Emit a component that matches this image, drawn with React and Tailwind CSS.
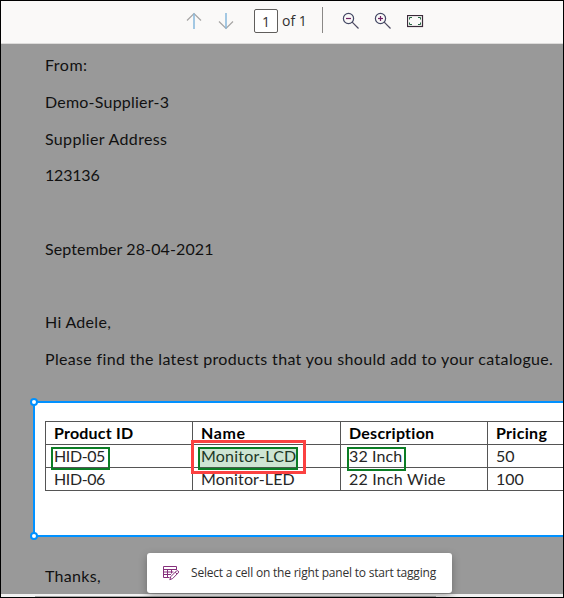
import React from "react";

const letterLines = [
  { text: "From:", spacing: "tracking-[0.5px]" },
  { text: "Demo-Supplier-3", spacing: "tracking-[0.22px]" },
  { text: "Supplier Address", spacing: "tracking-[0.34px]" },
  { text: "123136", spacing: "tracking-[-0.2px]" },
  { text: "", spacing: "" },
  { text: "September 28-04-2021", spacing: "tracking-[0.11px]" },
  { text: "", spacing: "" },
  { text: "Hi Adele,", spacing: "tracking-[0.3px]" },
  { text: "Please find the latest products that you should add to your catalogue.", spacing: "tracking-[0.34px]" },
];

function Arrow({ down }) {
  return (
    <svg width="16" height="18" viewBox="0 0 16 18" fill="none" className={down ? "rotate-180" : ""}>
      <path d="M1 8.5 L8 1.5 L15 8.5" stroke="#a6a5a4" strokeWidth="1.2" />
      <path d="M8 1.5 V17" stroke="#86b7dc" strokeWidth="1.5" />
    </svg>
  );
}

function Magnifier({ plus }) {
  return (
    <svg width="18" height="18" viewBox="0 0 18 18" fill="none" strokeWidth="1.2">
      <circle cx="6.5" cy="6.5" r="5.1" stroke="#454a66" />
      <path d="M10.2 10.2 L16.5 16.5" stroke="#4d4961" />
      <path d="M4 6.5 H9" stroke="#712164" />
      {plus && <path d="M6.5 4 V9" stroke="#712164" />}
    </svg>
  );
}

function FitPage() {
  return (
    <svg width="17" height="13" viewBox="0 0 17 13" fill="none">
      <rect x="0.5" y="0.5" width="15" height="11" stroke="#3b2a3a" strokeWidth="1.2" />
      <path d="M2.5 4.5 V2.5 H5 M11 2.5 H13.5 V4.5 M13.5 7.5 V9.5 H11 M5 9.5 H2.5 V7.5" stroke="#276b45" />
    </svg>
  );
}

function TableEdit() {
  return (
    <svg width="17" height="15" viewBox="0 0 17 15" fill="none" stroke="#86307c">
      <path d="M6.5 11.5 H0.5 V0.5 H13.5 V4 M0.5 3.5 H13.5 M0.5 6 H10.5 M0.5 8.5 H8 M4.5 3.5 V11.5 M8.5 3.5 V7.5" strokeWidth="1" />
      <path d="M6.8 13.7 L7.8 10.6 L13.4 5 Q14.5 4.2 15.3 5.1 Q16.1 6 15.2 6.9 L9.7 12.5 Z M12.2 6.2 L14 8" fill="#fff" strokeWidth="1" />
    </svg>
  );
}

function Handle({ place }) {
  return <span className={`absolute ${place} size-2 rounded-full border-2 border-[#0091ff] bg-white`} />;
}

function Cell({ children, bold, mark, spacing = "" }) {
  return (
    <div className={`relative flex items-center border-r border-b border-[#555] pl-2 whitespace-nowrap ${bold ? "font-bold text-black" : "text-[#262626]"}`}>
      <span className={spacing}>{children}</span>
      {mark}
    </div>
  );
}

export default function App() {
  return (
    <div className="relative flex h-[598px] w-[564px] flex-col overflow-hidden border border-black bg-[#999] font-['Lato',sans-serif] text-[16px] text-[#111]">
      <header className="flex h-[43px] shrink-0 items-start border-b border-[#dddcdb] bg-[#faf9f8] font-['Open_Sans',sans-serif]">
        <div className="mt-[11px] ml-[185px] flex gap-4">
          <Arrow />
          <Arrow down />
        </div>
        <div className="mt-2 ml-5 flex h-6 w-6 items-center justify-center rounded-[2px] border border-[#605e5c] bg-white text-[14px] text-[#323130]">1</div>
        <span className="mt-2 ml-1 w-[25px] text-[14px] leading-6 whitespace-nowrap text-[#323130]">of 1</span>
        <div className="mt-1.5 ml-[15px] h-[26px] w-px bg-[#8a8886]" />
        <div className="mt-[11px] ml-[19px] flex gap-[14px]">
          <Magnifier />
          <Magnifier plus />
        </div>
        <div className="mt-[14px] ml-[15px]">
          <FitPage />
        </div>
      </header>

      <main className="flex min-h-0 flex-1 flex-col pt-[3px]">
        <div className="shrink-0 pl-[44px]">
          {letterLines.map((line, i) => (
            <p key={i} className={`h-[36.75px] leading-[36.75px] whitespace-nowrap ${line.spacing}`}>{line.text}</p>
          ))}
        </div>

        <section className="relative mt-[23px] ml-8 h-[136px] shrink-0 border-y-2 border-l-2 border-[#0091ff] bg-white pt-[18px] pl-[10px]">
          <Handle place="-top-[5px] -left-[5px]" />
          <Handle place="-bottom-[5px] -left-[5px]" />
          <div className="grid w-[590px] grid-cols-[147px_148px_147px_147px] grid-rows-[23px_23px_23px] border-t border-l border-[#555]">
            <Cell bold spacing="tracking-[0.2px]">Product ID</Cell>
            <Cell bold spacing="tracking-[0.6px]">Name</Cell>
            <Cell bold spacing="tracking-[0.25px]">Description</Cell>
            <Cell bold spacing="tracking-[0.3px]">Pricing</Cell>
            <Cell spacing="tracking-[-0.4px]" mark={<span className="absolute top-[2px] left-[5px] h-[23px] w-[59px] border-2 border-[#0b7d25]" />}>HID-05</Cell>
            <Cell
              spacing="tracking-[0.2px]"
              mark={
                <>
                  <span className="absolute top-[2px] left-[5px] z-10 h-[23px] w-[100px] border-2 border-[#0b7d25] bg-[#0b7d25]/20" />
                  <span className="absolute -top-[5px] -left-[2px] z-10 h-[34px] w-[115px] border-3 border-[#fb4141]" />
                </>
              }
            >
              Monitor-LCD
            </Cell>
            <Cell spacing="tracking-[0.1px]" mark={<span className="absolute top-[2px] left-[6px] h-[24px] w-[59px] border-2 border-[#0b7d25]" />}>32 Inch</Cell>
            <Cell>50</Cell>
            <Cell spacing="tracking-[-0.4px]">HID-06</Cell>
            <Cell spacing="tracking-[0.15px]">Monitor-LED</Cell>
            <Cell spacing="tracking-[0.2px]">22 Inch Wide</Cell>
            <Cell>100</Cell>
          </div>
        </section>

        <p className="mt-5 shrink-0 pl-[44px] leading-[37px] tracking-[0.3px]">Thanks,</p>
      </main>

      <footer className="h-[3px] shrink-0 bg-[#f1f1f1] pt-[2px] pl-[34px]">
        <div className="h-px w-[401px] bg-[#a8a8a8]" />
      </footer>

      <div className="absolute top-[552px] left-[146px] z-20 flex h-10 w-[305px] items-center rounded-[3px] bg-white pl-4 font-['Open_Sans',sans-serif] text-[12px] text-[#323130] shadow-[0_3px_8px_rgba(0,0,0,0.3)]">
        <TableEdit />
        <span className="ml-[11px] tracking-[-0.2px] whitespace-nowrap">Select a cell on the right panel to start tagging</span>
      </div>
    </div>
  );
}
